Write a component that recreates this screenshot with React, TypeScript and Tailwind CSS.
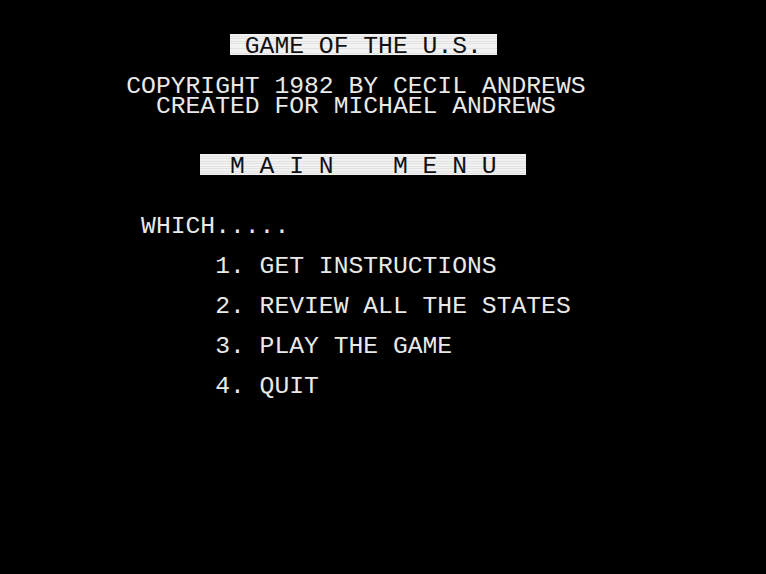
const font = { fontFamily: '"Liberation Mono", "DejaVu Sans Mono", monospace' };

function Row({ children }: { children?: React.ReactNode }) {
  return <div className="h-5 whitespace-pre leading-[25px]">{children ?? " "}</div>;
}

function Inverse({ text }: { text: string }) {
  return (
    <span className="inline-block h-[21px] bg-[#ececec] bg-[repeating-linear-gradient(to_bottom,#f2f2f2_0px,#f2f2f2_1.5px,#e2e2e2_1.5px,#e2e2e2_2.5px)] text-[#111]">
      {text}
    </span>
  );
}

const items = ["1. GET INSTRUCTIONS", "2. REVIEW ALL THE STATES", "3. PLAY THE GAME", "4. QUIT"];

export default function App() {
  return (
    <div className="h-[574px] w-[766px] overflow-hidden bg-black pl-[67px] pt-[34px] text-[24.7px] text-[#e9e9e9] antialiased" style={font}>
      <Row>
        {"           "}
        <Inverse text=" GAME OF THE U.S. " />
      </Row>
      <Row />
      <Row>{"    COPYRIGHT 1982 BY CECIL ANDREWS"}</Row>
      <Row>{"      CREATED FOR MICHAEL ANDREWS"}</Row>
      <Row />
      <Row />
      <Row>
        {"         "}
        <Inverse text="  M A I N    M E N U  " />
      </Row>
      <Row />
      <Row />
      <Row>{"     WHICH....."}</Row>
      {items.map((it) => (
        <div key={it}>
          <Row />
          <Row>{"          " + it}</Row>
        </div>
      ))}
    </div>
  );
}
